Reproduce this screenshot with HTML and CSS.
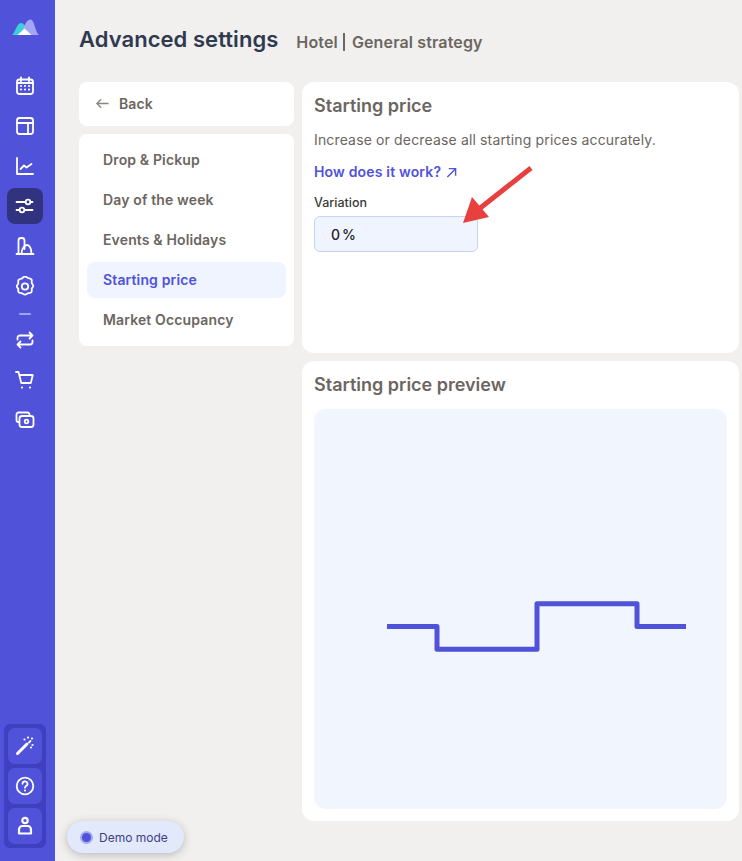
FILE: index.html
```html
<!DOCTYPE html>
<html lang="en">
<head>
<meta charset="utf-8">
<title>Advanced settings</title>
<link rel="stylesheet" href="styles.css">
</head>
<body>
<div class="app">
  <aside class="sidebar">
    <div class="logo">
      <svg width="27" height="17" viewBox="0 0 27 17">
        <path d="M0 16 C3 14 5 4 9 4 C11 4 12.500 6 14 8.500 L11 16Z" fill="#3ecfd6"/>
        <path d="M11 9.500 C14 4 15 .500 18.500 .500 C22.500 .500 23 13 27 16 L12 16Z" fill="#a3a6f5"/>
        <path d="M5.500 16 L12.500 9.500 L19.500 16Z" fill="#fff"/>
      </svg>
    </div>
    <nav class="nav">
      <a class="nav-item"><svg class="ico" viewBox="0 0 20 20"><rect x="2" y="3.500" width="16" height="14.500" rx="2.500"/><path d="M6 1.500v4M14 1.500v4M2 7h16"/><path class="dots" d="M6 10h.01M10 10h.01M14 10h.01M6 13.500h.01M10 13.500h.01M14 13.500h.01"/></svg></a>
      <a class="nav-item"><svg class="ico" viewBox="0 0 20 20"><rect x="2" y="2" width="16" height="16" rx="2.500"/><path d="M2 7h16M13 7v11"/></svg></a>
      <a class="nav-item"><svg class="ico" viewBox="0 0 20 20"><path d="M2 2v16h16"/><path d="M5.500 13 9 9.500l2.500 2L16.500 8"/></svg></a>
      <a class="nav-item active"><svg class="ico" viewBox="0 0 20 20"><path d="M1.500 6h16M1.500 14h16"/><circle cx="13" cy="6" r="2.300" class="knob"/><circle cx="7" cy="14" r="2.300" class="knob"/></svg></a>
      <a class="nav-item"><svg class="ico" viewBox="0 0 20 20"><path d="M1.500 18h17"/><path d="M3.500 18V4.500A2.500 2.500 0 0 1 6 2h1a2.500 2.500 0 0 1 2.500 2.500V13"/><path d="M6.500 18C6.500 12.500 9.500 9 12 9c2.500 0 4.500 3.500 4.500 9"/></svg></a>
      <a class="nav-item"><svg class="ico" viewBox="0 0 20 20"><path d="M10 1.800c1.400 0 2.200 1.100 3.300 1.500 1.300.2 2.500.3 3.200 1.400.7 1.200.1 2.300.2 3.500.4 1 1.500 1.800 1.500 3s-1.100 1.600-1.500 2.600c-.1 1.200.5 2.300-.2 3.300-.7 1.100-1.900 1-3.200 1.300-1.100.4-1.900 1.400-3.300 1.400s-2.200-1-3.300-1.400c-1.300-.3-2.500-.2-3.200-1.300-.7-1-.1-2.100-.2-3.300C2.900 13.300 1.800 12.900 1.800 11.700s1.100-2 1.500-3c.1-1.200-.5-2.300.2-3.500.7-1.100 1.900-1.200 3.200-1.400C7.800 2.900 8.600 1.800 10 1.800z" transform="translate(0 -1.200)"/><circle cx="10" cy="10.500" r="3.200"/></svg></a>
      <div class="nav-sep"></div>
      <a class="nav-item"><svg class="ico" viewBox="0 0 20 20"><path d="M2.500 9.500V8a2.500 2.500 0 0 1 2.500-2.500h12.500M14.500 2.500l3 3-3 3"/><path d="M17.500 10.500V12a2.500 2.500 0 0 1-2.500 2.500H2.500M5.500 11.500l-3 3 3 3"/></svg></a>
      <a class="nav-item"><svg class="ico" viewBox="0 0 20 20"><path d="M1 2h2.500l2.800 11h9.500l2-8H4.500"/><path class="dots" d="M7 17.500h.01M15 17.500h.01"/></svg></a>
      <a class="nav-item"><svg class="ico" viewBox="0 0 20 20"><path d="M14.500 5V4.500A2 2 0 0 0 12.500 2.500H3.500a2 2 0 0 0-2 2V10a2 2 0 0 0 2 2h.5"/><rect x="4.500" y="6" width="14" height="11" rx="2.500"/><circle cx="11.500" cy="11.500" r="1.800"/></svg></a>
    </nav>
    <div class="tools">
      <a class="tool"><svg class="ico" viewBox="0 0 20 20"><path d="M2.500 17.500 12 8" class="thick"/><path d="M14 6.500 15.500 5"/><path class="dots" d="M9.500 3.500h.01M13 1.500h.01M17 2.500h.01M17.500 9h.01M16 11.500h.01"/></svg></a>
      <a class="tool"><svg class="ico" viewBox="0 0 20 20"><circle cx="10" cy="10" r="8.300"/><path d="M7.500 7.800A2.500 2.500 0 1 1 10.800 10.200c-.6.300-.8.700-.8 1.500"/><path class="dots" d="M10 14.500h.01"/></svg></a>
      <a class="tool"><svg class="ico ico-bold" viewBox="0 0 20 20"><circle cx="10" cy="4.500" r="2.700"/><path d="M7.500 10h5a3.500 3.500 0 0 1 3.500 3.500V17.500H4V13.500A3.500 3.500 0 0 1 7.500 10z"/></svg></a>
    </div>
  </aside>

  <main class="main">
    <header class="head">
      <h1 class="title">Advanced settings</h1>
      <p class="subtitle">Hotel <span class="bar"></span> General strategy</p>
    </header>
    <div class="columns">
      <div class="left">
        <a class="back">
          <svg class="back-ico" viewBox="0 0 16 16"><path d="M14.500 8H2M6.500 3.500 2 8l4.500 4.500"/></svg>
          Back
        </a>
        <div class="menu">
          <a class="menu-item">Drop &amp; Pickup</a>
          <a class="menu-item">Day of the week</a>
          <a class="menu-item">Events &amp; Holidays</a>
          <a class="menu-item current">Starting price</a>
          <a class="menu-item">Market Occupancy</a>
        </div>
      </div>
      <div class="right">
        <section class="card card-form">
          <h2 class="card-title">Starting price</h2>
          <p class="desc">Increase or decrease all starting prices accurately.</p>
          <a class="link">How does it work?
            <svg class="link-ico" viewBox="0 0 12 12"><path d="M1.500 11 10.500 2M3 1.800H10.500V9.500"/></svg>
          </a>
          <label class="label">Variation</label>
          <div class="input"><span>0</span><span class="pct">%</span></div>
        </section>
        <section class="card card-chart">
          <h2 class="card-title">Starting price preview</h2>
          <div class="chart">
            <svg class="line" width="413" height="400" viewBox="0 0 413 400">
              <path d="M73 217.600H123V240.300H223V194.700H323V217.600H372"/>
            </svg>
          </div>
        </section>
      </div>
    </div>
  </main>
</div>

<svg class="arrow" width="90" height="70" viewBox="0 0 90 70">
  <path d="M70 4 L18 45" class="arrow-shaft"/>
  <path d="M2 59 L11 33 L28 53Z" class="arrow-head"/>
</svg>

<div class="demo"><span class="dot"></span>Demo mode</div>
</body>
</html>
```
FILE: styles.css
```css
* { box-sizing: border-box; }
html, body { margin: 0; height: 100%; }
body {
  font-family: Inter, "Liberation Sans", sans-serif;
  background: #f1f0ee;
  color: #6b6661;
  overflow: hidden;
  position: relative;
}
h1, h2, p { margin: 0; }
.app { display: flex; height: 861px; }

.sidebar {
  width: 55px;
  flex: none;
  background: #5052d9;
  display: flex;
  flex-direction: column;
  padding: 19px 0 13px;
}
.logo { height: 17px; margin-left: 12px; display: flex; }
.nav {
  display: flex;
  flex-direction: column;
  gap: 4px;
  margin-top: 32px;
  margin-left: 7px;
  flex: 1;
}
.nav-item {
  width: 36px;
  height: 36px;
  border-radius: 8px;
  display: flex;
  align-items: center;
  justify-content: center;
}
.nav-item.active { background: #32337f; }
.nav-sep {
  width: 12px;
  height: 2px;
  background: #9ea6ee;
  border-radius: 1px;
  margin: 5px 0 3px 12px;
  flex: none;
}
.ico {
  width: 20px;
  height: 20px;
  fill: none;
  stroke: #fff;
  stroke-width: 1.800;
  stroke-linecap: round;
  stroke-linejoin: round;
}
.ico-bold { stroke-width: 2.200; }
.ico .dots { stroke-width: 2.200; }
.ico .thick { stroke-width: 3; }
.ico .knob { fill: #32337f; }
.tools {
  width: 42px;
  margin-left: 4px;
  background: #3f40bf;
  border-radius: 6px;
  padding: 4px;
  display: flex;
  flex-direction: column;
  gap: 4px;
}
.tool {
  height: 36px;
  border-radius: 7px;
  background: #5052d9;
  display: flex;
  align-items: center;
  justify-content: center;
}

.main { flex: 1; padding: 25px 3px 40px 24px; min-width: 0; }
.head { display: flex; align-items: baseline; gap: 18px; height: 57px; }
.title { font-size: 22px; line-height: 28px; font-weight: 600; color: #2f3a4f; letter-spacing: .05px; }
.subtitle {
  font-size: 16px;
  font-weight: 600;
  color: #6b6661;
  display: flex;
  align-items: center;
  letter-spacing: .14px;
  position: relative;
  top: 1px;
}
.bar { display: inline-block; width: 2px; height: 18px; background: #6b6661; margin: 0 7px 0 5px; }

.columns { display: flex; gap: 8px; }
.left { width: 215px; flex: none; display: flex; flex-direction: column; gap: 8px; }
.back {
  height: 44px;
  background: #fff;
  border-radius: 8px;
  display: flex;
  align-items: center;
  gap: 9px;
  padding: 0 0 1px 16px;
  font-size: 14px;
  font-weight: 600;
  letter-spacing: .1px;
}
.back-ico { width: 15px; height: 15px; fill: none; stroke: #8a8580; stroke-width: 1.400; }
.menu {
  background: #fff;
  border-radius: 8px;
  padding: 8px;
  display: flex;
  flex-direction: column;
  gap: 4px;
}
.menu-item {
  height: 36px;
  border-radius: 8px;
  padding: 0 0 1px 16px;
  display: flex;
  align-items: center;
  font-size: 14px;
  font-weight: 600;
  letter-spacing: .14px;
}
.menu-item.current { background: #eff4fe; color: #5052d9; }

.right { flex: 1; display: flex; flex-direction: column; gap: 8px; min-width: 0; }
.card { background: #fff; border-radius: 12px; padding: 12px; }
.card-form { height: 271px; }
.card-chart { height: 460px; }
.card-title { font-size: 18px; line-height: 24px; font-weight: 600; color: #6b6661; }
.desc { font-size: 14px; line-height: 20px; margin-top: 12px; letter-spacing: .15px; }
.link {
  display: flex;
  align-items: center;
  gap: 5px;
  margin-top: 12px;
  font-size: 14px;
  line-height: 20px;
  font-weight: 600;
  letter-spacing: .17px;
  color: #5052d9;
}
.link-ico { width: 11px; height: 11px; fill: none; stroke: #5052d9; stroke-width: 1.500; }
.label { display: block; margin-top: 12px; font-size: 12.500px; line-height: 18px; color: #3a3a3a; font-weight: 500; }
.input {
  margin-top: 4px;
  width: 164px;
  height: 36px;
  background: #eff4fe;
  border: 1px solid #c5d4f5;
  border-radius: 6px;
  display: flex;
  align-items: center;
  padding-left: 16px;
  font-size: 14px;
  color: #222;
  font-weight: 500;
}
.pct { margin-left: 2px; }
.chart {
  margin-top: 12px;
  height: 400px;
  background: #f0f5fe;
  border-radius: 12px;
}
.line { display: block; }
.line path { fill: none; stroke: #5052d9; stroke-width: 5; stroke-linejoin: round; }

.arrow { position: absolute; left: 461px; top: 164px; }
.arrow-shaft { stroke: #e8403f; stroke-width: 5; fill: none; stroke-linecap: butt; }
.arrow-head { fill: #e8403f; }

.demo {
  position: absolute;
  left: 67px;
  top: 821px;
  width: 117px;
  height: 32px;
  border-radius: 16px;
  background: #e1e9fb;
  box-shadow: 0 2px 8px rgba(60, 60, 80, .3);
  display: flex;
  align-items: center;
  padding-left: 15px;
  gap: 8px;
  font-size: 12px;
  color: #3e3f85;
}
.dot {
  width: 9px;
  height: 9px;
  border-radius: 50%;
  background: #5052d9;
  box-shadow: 0 0 0 2px #a4aaee;
  flex: none;
}
```
